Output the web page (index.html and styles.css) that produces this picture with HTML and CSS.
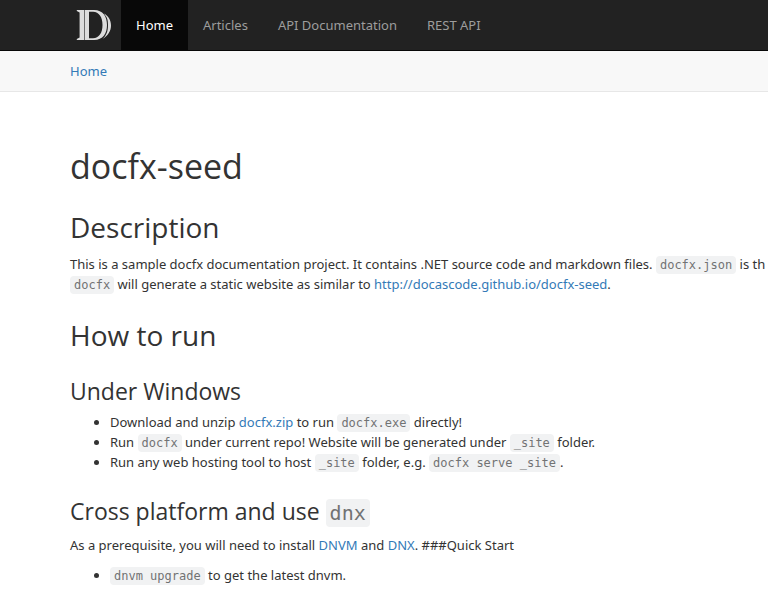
FILE: index.html
```html
<!DOCTYPE html>
<html lang="en">
<head>
<meta charset="utf-8">
<title>docfx-seed</title>
<link rel="stylesheet" href="styles.css">
</head>
<body>
<header>
  <nav class="navbar" aria-label="Main">
    <a class="brand" href="#" aria-label="docfx home">
      <svg width="36" height="34" viewBox="0 0 36 34" fill="#ddd">
        <path d="M.8 2H8V32H.8V31L3.600 29.500V4.500L.8 3Z"/>
        <path fill-rule="evenodd" d="M8.600 2H18C27 2 31 8.500 31 17S27 32 18 32H8.600ZM13 3.800V30.200H17C23 30 26.500 25 26.500 17S23 4 17 3.800Z"/>
        <path d="M28 5.500C32.500 8 35 12 35 17.500S32 27.500 26.500 31C30.500 27.500 32 23 32 17S31 9.500 28 5.500Z"/>
      </svg>
    </a>
    <a class="nav-link active" href="#">Home</a>
    <a class="nav-link" href="#">Articles</a>
    <a class="nav-link" href="#">API Documentation</a>
    <a class="nav-link" href="#">REST API</a>
  </nav>
  <nav class="breadcrumb" aria-label="Breadcrumb"><a href="#">Home</a></nav>
</header>
<main>
  <h1>docfx-seed</h1>
  <h2>Description</h2>
  <p>This is a sample docfx documentation project. It contains .NET source code and markdown files. <code>docfx.json</code> is th<br><code>docfx</code> will generate a static website as similar to <a href="#">http://docascode.github.io/docfx-seed</a>.</p>
  <h2>How to run</h2>
  <h3>Under Windows</h3>
  <ul>
    <li>Download and unzip <a href="#">docfx.zip</a> to run <code>docfx.exe</code> directly!</li>
    <li>Run <code>docfx</code> under current repo! Website will be generated under <code>_site</code> folder.</li>
    <li>Run any web hosting tool to host <code>_site</code> folder, e.g. <code>docfx serve _site</code>.</li>
  </ul>
  <h3>Cross platform and use <code>dnx</code></h3>
  <p>As a prerequisite, you will need to install <a href="#">DNVM</a> and <a href="#">DNX</a>. ###Quick Start</p>
  <ul>
    <li><code>dnvm upgrade</code> to get the latest dnvm.</li>
  </ul>
</main>
</body>
</html>
```
FILE: styles.css
```css
* { box-sizing: border-box; }
body {
  margin: 0;
  color: #333;
  background: #fff;
  font: 13px/20px "Noto Sans", "Open Sans", sans-serif;
  overflow-x: hidden;
}
a { color: #337ab7; text-decoration: none; }
.navbar {
  display: flex;
  padding-left: 70px;
  background: #222;
  border-bottom: 1px solid #080808;
}
.brand { display: flex; width: 51px; padding: 8px 6px; }
.nav-link { padding: 15px; color: #9d9d9d; }
.nav-link.active { color: #fff; background: #080808; }
.breadcrumb {
  padding: 10px 70px;
  background: #f8f8f8;
  border-bottom: 1px solid #e7e7e7;
}
main { padding: 54px 0 0 70px; white-space: nowrap; }
h1, h2, h3 {
  margin: 0;
  font-family: "Open Sans", "Noto Sans", sans-serif;
  font-weight: 400;
}
h1 { font-size: 34px; line-height: 40px; }
h2 { margin-top: 24px; font-size: 28px; line-height: 34px; }
h3 { margin-top: 25px; font-size: 23px; line-height: 28px; }
p { margin: 10px 0; }
ul { margin: 7px 0 10px; padding-left: 40px; }
code {
  padding: 2px 4px;
  color: #717374;
  background: #f1f2f3;
  border-radius: 4px;
  font: 12px "DejaVu Sans Mono", monospace;
}
h3 code { font-size: 20px; }
```
